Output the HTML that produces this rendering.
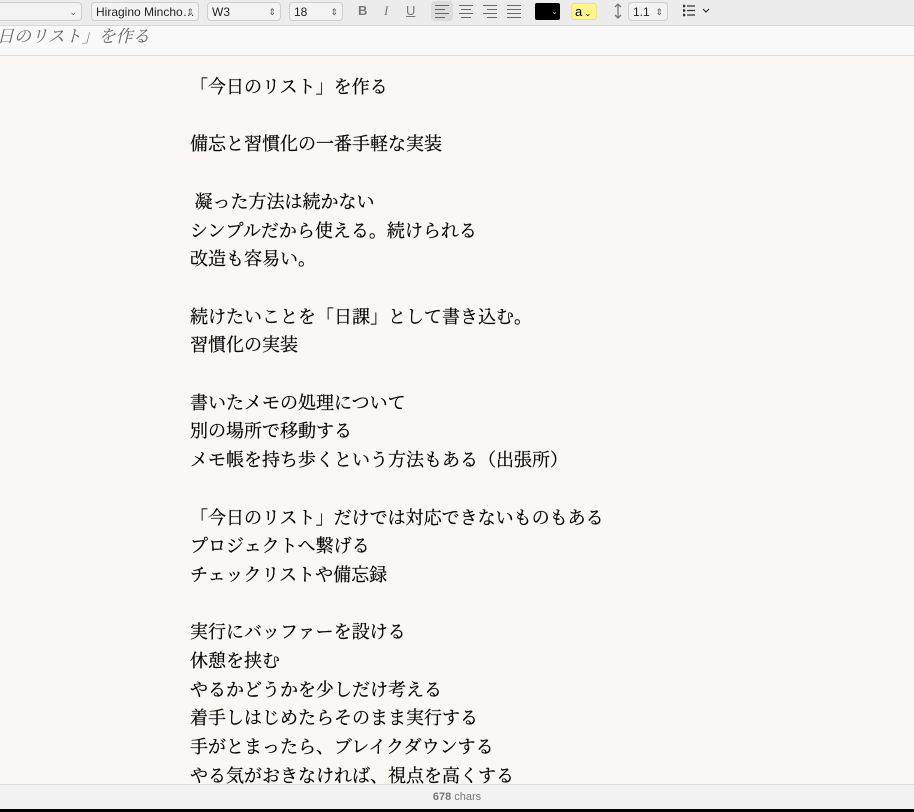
<!DOCTYPE html>
<html><head><meta charset="utf-8"><style>
body{margin:0;width:914px;height:812px;overflow:hidden;background:#000;font-family:"Liberation Sans",sans-serif;position:relative}
.tb{position:absolute;left:0;top:0;width:914px;height:25px;background:#ececec;border-bottom:1px solid #d8d8d8}
.sel{position:absolute;top:2px;height:19px;border:1px solid #cfcfcf;border-radius:4px;background:#f3f3f3;font-size:12px;line-height:18px;color:#222;padding-left:4px;box-sizing:border-box}
.sel span{position:absolute;right:4px;top:0;font-size:9px;color:#555}
.ic{position:absolute;top:3px;font-size:13px;color:#777}
.title{position:absolute;left:0;top:26px;width:914px;height:29px;background:#f9f9f9;border-bottom:1px solid #ddd;font-family:"Liberation Serif","Noto Serif CJK JP",serif;font-style:italic;color:#666;font-size:17px;line-height:18px}
.body{position:absolute;left:0;top:56px;width:914px;height:728px;background:#faf7f4;overflow:hidden}
.txt{position:absolute;left:190px;top:17px;font-family:"Liberation Serif","Noto Serif CJK JP",serif;font-size:18px;line-height:28.7px;color:#000;white-space:pre;-webkit-text-stroke:0.2px #000}
.foot{position:absolute;left:0;top:784px;width:914px;height:24px;background:#f2f2f2;border-top:1px solid #ddd;text-align:center;font-size:11px;line-height:24px;color:#777}
</style></head><body>
<div class="tb">
<div class="sel" style="left:-4px;width:86px"><span>⌄</span></div>
<div class="sel" style="left:91px;width:108px">Hiragino Mincho…<span>⇕</span></div>
<div class="sel" style="left:207px;width:74px">W3<span>⇕</span></div>
<div class="sel" style="left:289px;width:54px">18<span>⇕</span></div>
<div class="ic" style="left:358px;font-weight:bold">B</div>
<div class="ic" style="left:384px;font-style:italic;font-family:'Liberation Serif'">I</div>
<div class="ic" style="left:406px;text-decoration:underline">U</div>
<div style="position:absolute;left:431px;top:1px;width:22px;height:20px;background:#dcdcdc;border-radius:4px"></div>
<svg style="position:absolute;left:434px;top:4px" width="110" height="14" stroke="#666" stroke-width="1">
<path d="M1 1.5h14M1 5.5h10M1 9.5h14M1 13.5h10"/>
<path d="M25 1.5h14M27 5.5h10M25 9.5h14M27 13.5h10"/>
<path d="M49 1.5h14M53 5.5h10M49 9.5h14M53 13.5h10"/>
<path d="M73 1.5h14M73 5.5h14M73 9.5h14M73 13.5h14"/>
</svg>
<div style="position:absolute;left:535px;top:3px;width:25px;height:17px;background:#000;border-radius:2px;color:#ccc;font-size:8px;text-align:right;line-height:17px;padding-right:2px;box-sizing:border-box">⌄</div>
<div style="position:absolute;left:571px;top:3px;width:26px;height:17px;background:#fff68a;border:1px solid #eee08a;border-radius:3px;font-size:13px;line-height:15px;box-sizing:border-box;padding-left:3px">a<span style="font-size:8px"> ⌄</span></div>
<svg style="position:absolute;left:613px;top:3px" width="10" height="16" stroke="#777" fill="none" stroke-width="1.3"><path d="M5 1v14M2 4l3-3 3 3M2 12l3 3 3-3"/></svg>
<div class="sel" style="left:628px;width:40px">1.1<span>⇕</span></div>
<svg style="position:absolute;left:683px;top:4px" width="28" height="13" stroke="#333" fill="none" stroke-width="1.2"><path d="M4 2h8M4 6.5h8M4 11h8M20 5l3 3 3-3"/><circle cx="1" cy="2" r=".8" fill="#333"/><circle cx="1" cy="6.5" r=".8" fill="#333"/><circle cx="1" cy="11" r=".8" fill="#333"/></svg>
</div>
<div class="title"><div style="position:absolute;left:-3px;top:2px">日のリスト」を作る</div></div>
<div class="body"><div class="txt">「今日のリスト」を作る

備忘と習慣化の一番手軽な実装

 凝った方法は続かない
シンプルだから使える。続けられる
改造も容易い。

続けたいことを「日課」として書き込む。
習慣化の実装

書いたメモの処理について
別の場所で移動する
メモ帳を持ち歩くという方法もある（出張所）

「今日のリスト」だけでは対応できないものもある
プロジェクトへ繋げる
チェックリストや備忘録

実行にバッファーを設ける
休憩を挟む
やるかどうかを少しだけ考える
着手しはじめたらそのまま実行する
手がとまったら、ブレイクダウンする
やる気がおきなければ、視点を高くする</div></div>
<div class="foot"><b>678</b> chars</div>
</body></html>
